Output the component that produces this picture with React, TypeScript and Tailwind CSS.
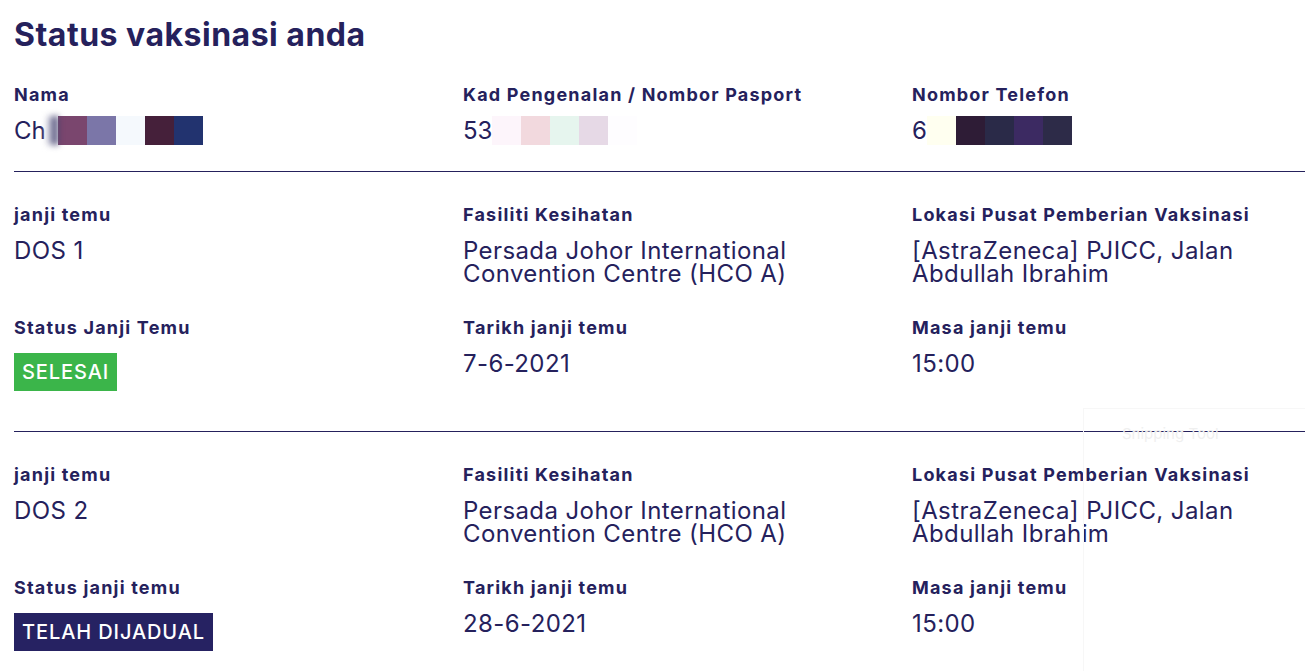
import React, { ReactNode } from "react"

const font = { fontFamily: "Inter, 'Noto Sans', sans-serif" }

const Label: React.FC<{ children: ReactNode }> = ({ children }) => (
    <div className="text-[18px] font-bold leading-[22px] tracking-[1.2px] text-[#25215c]">
        {children}
    </div>
)

const Value: React.FC<{ children: ReactNode }> = ({ children }) => (
    <div className="mt-[13px] text-[24px] leading-[23px] tracking-[0.4px] text-[#25215c]">
        {children}
    </div>
)

const Pixels: React.FC<{ colors: string[] }> = ({ colors }) => (
    <span className="flex">
        {colors.map((c, i) => (
            <span key={i} className="block h-[29px] w-[29px]" style={{ background: c }} />
        ))}
    </span>
)

const Badge: React.FC<{ color: string; children: ReactNode }> = ({ color, children }) => (
    <div className="mt-[14px]">
        <span className={`inline-block px-[8px] text-[20px] font-medium leading-[38px] tracking-[0.9px] text-white ${color}`}>
            {children}
        </span>
    </div>
)

interface Dose {
    dose: string
    statusLabel: string
    badge: string
    badgeColor: string
    date: string
}

const DoseSection: React.FC<{ d: Dose }> = ({ d }) => (
    <section className="border-t border-[#25215c] pt-[32px] pb-[40px]">
        <div className="grid grid-cols-[449px_449px_449px] gap-y-[32px]">
            <div>
                <Label>janji temu</Label>
                <Value>{d.dose}</Value>
            </div>
            <div>
                <Label>Fasiliti Kesihatan</Label>
                <Value>Persada Johor International<br />Convention Centre (HCO A)</Value>
            </div>
            <div>
                <Label>Lokasi Pusat Pemberian Vaksinasi</Label>
                <Value>[AstraZeneca] PJICC, Jalan<br />Abdullah Ibrahim</Value>
            </div>
            <div>
                <Label>{d.statusLabel}</Label>
                <Badge color={d.badgeColor}>{d.badge}</Badge>
            </div>
            <div>
                <Label>Tarikh janji temu</Label>
                <Value>{d.date}</Value>
            </div>
            <div>
                <Label>Masa janji temu</Label>
                <Value>15:00</Value>
            </div>
        </div>
    </section>
)

const doses: Dose[] = [
    { dose: "DOS 1", statusLabel: "Status Janji Temu", badge: "SELESAI", badgeColor: "bg-[#3bb54a]", date: "7-6-2021" },
    { dose: "DOS 2", statusLabel: "Status janji temu", badge: "TELAH DIJADUAL", badgeColor: "bg-[#262262]", date: "28-6-2021" },
]

export default function App() {
    return (
        <div className="relative h-[671px] w-[1305px] overflow-hidden bg-white pl-[14px]" style={font}>
            <h1 className="pt-[15px] text-[32px] font-bold leading-[40px] tracking-[0.5px] text-[#25215c]">
                Status vaksinasi anda
            </h1>

            <div className="mt-[29px] grid grid-cols-[449px_449px_449px] pb-[26px]">
                <div>
                    <Label>Nama</Label>
                    <div className="mt-[10px] flex items-center text-[24px] leading-[29px] text-[#25215c]">
                        Ch
                        <span className="block h-[29px] w-[12px] bg-gradient-to-r from-[#ffffff] to-[#2a2456] blur-[3px]" />
                        <Pixels colors={["#7a466e", "#7b76a8", "#f5f9fd", "#45203a", "#22336f"]} />
                    </div>
                </div>
                <div>
                    <Label>Kad Pengenalan / Nombor Pasport</Label>
                    <div className="mt-[10px] flex items-center text-[24px] leading-[29px] text-[#25215c]">
                        53
                        <Pixels colors={["#fdf5fb", "#f2d9de", "#e6f5ee", "#e6d9e6", "#fefdff"]} />
                    </div>
                </div>
                <div>
                    <Label>Nombor Telefon</Label>
                    <div className="mt-[10px] flex items-center text-[24px] leading-[29px] text-[#25215c]">
                        6
                        <Pixels colors={["#fffff0", "#2e1c36", "#2a2a48", "#3c2a62", "#2d2b48"]} />
                    </div>
                </div>
            </div>

            {doses.map(d => (
                <DoseSection key={d.dose} d={d} />
            ))}

            {/* faint ghost of a snipping tool window */}
            <div className="pointer-events-none absolute left-[1083px] top-[408px] h-[300px] w-[260px] border border-[#f7f7f7]">
                <div className="pl-[38px] pt-[14px] text-[15px] text-[#efefef]">Snipping Tool</div>
            </div>
        </div>
    )
}
